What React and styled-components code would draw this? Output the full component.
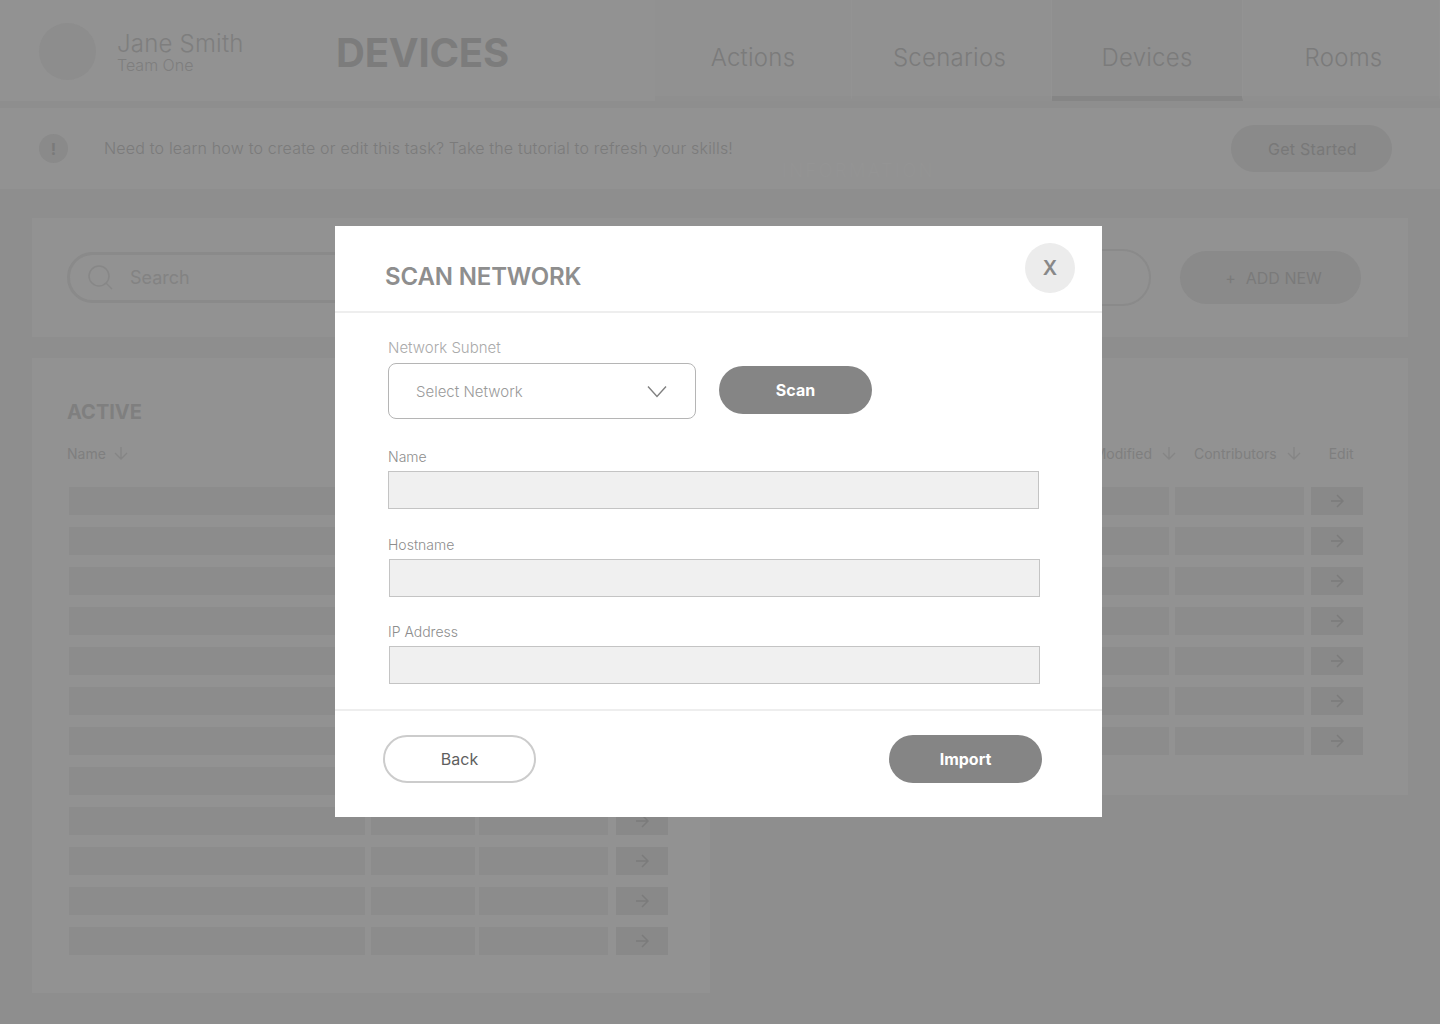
import React from 'react';
import styled, { createGlobalStyle } from 'styled-components';

const GlobalStyle = createGlobalStyle`
  html, body {
    margin: 0;
    padding: 0;
    background: #8e8e8e;
    font-family: Inter, "Liberation Sans", sans-serif;
  }
  * { box-sizing: border-box; }
`;

const Page = styled.div`
  position: relative;
  width: 1440px;
  height: 1024px;
  overflow: hidden;
  background: #8e8e8e;
`;

// header
const Header = styled.header`
  display: flex;
  height: 101px;
  background: #929292;
`;

const Avatar = styled.div`
  width: 57px;
  height: 57px;
  margin: 23px 21px 0 39px;
  border-radius: 50%;
  background: #8d8d8d;
`;

const User = styled.div`
  width: 219px;
  padding-top: 32px;
  color: #7e7e7e;
`;

const UserName = styled.div`
  font-size: 24px;
  font-weight: 300;
  line-height: 24px;
  letter-spacing: 0.2px;
`;

const UserTeam = styled.div`
  font-size: 16px;
  font-weight: 300;
  line-height: 18px;
`;

const PageTitle = styled.h1`
  margin: 29px 0 0;
  font-size: 40px;
  font-weight: 700;
  line-height: 48px;
  letter-spacing: -0.2px;
  color: #7c7c7c;
`;

const Tabs = styled.nav`
  display: flex;
  margin-left: auto;
`;

const Tab = styled.div`
  display: flex;
  justify-content: center;
  width: ${p => p.$w}px;
  padding: 42px ${p => p.$pr || 0}px 0 ${p => p.$pl || 0}px;
  font-size: 24px;
  font-weight: 300;
  line-height: 32px;
  letter-spacing: 0.25px;
  color: #7b7b7b;
  background: ${p => (p.$active ? '#8f8f8f' : '#919191')};
  border-bottom: 5px solid ${p => (p.$active ? '#858585' : '#8f8f8f')};
  border-right: 1px solid #939393;
`;

// info bar
const InfoBar = styled.div`
  position: relative;
  display: flex;
  align-items: center;
  height: 81px;
  margin-top: 7px;
  padding: 0 48px 0 39px;
  background: #929292;
`;

const InfoIcon = styled.div`
  display: flex;
  align-items: center;
  justify-content: center;
  width: 29px;
  height: 29px;
  margin-right: 36px;
  border-radius: 50%;
  background: #8a8a8a;
  font-size: 16px;
  font-weight: 700;
  color: #7a7a7a;
`;

const InfoText = styled.div`
  margin-top: -2px;
  font-size: 16px;
  font-weight: 300;
  letter-spacing: 0.18px;
  color: #7b7b7b;
`;

const GhostLabel = styled.div`
  position: absolute;
  left: 782px;
  top: 52px;
  font-size: 18px;
  font-weight: 300;
  letter-spacing: 2.6px;
  color: #949494;
`;

const PillButton = styled.div`
  display: flex;
  align-items: center;
  justify-content: center;
  width: ${p => p.$w}px;
  height: ${p => p.$h}px;
  border-radius: 30px;
  background: #8a8a8a;
  font-size: 16px;
  color: #787878;
`;

const InfoAction = styled(PillButton)`
  margin-left: auto;
  padding: 1px 0 0 2px;
  letter-spacing: 0.25px;
`;

// page body
const Main = styled.main`
  padding: 29px 32px 0;
`;

const SearchCard = styled.section`
  display: flex;
  align-items: center;
  height: 119px;
  padding: 0 47px 0 35px;
  background: #929292;
`;

const SearchBox = styled.div`
  display: flex;
  align-items: center;
  width: 500px;
  height: 51px;
  padding-left: 18px;
  border: 3px solid #8a8a8a;
  border-radius: 26px;
  font-size: 18px;
  color: #838383;
`;

const SearchLabel = styled.span`
  margin-left: 16px;
`;

const FilterBox = styled.div`
  width: 531px;
  height: 57px;
  margin-left: 53px;
  border: 2px solid #8a8a8a;
  border-radius: 29px;
`;

const AddButton = styled(PillButton)`
  margin-left: 29px;
  padding-left: 6px;
  gap: 10px;
  color: #7a7a7a;
`;

const Columns = styled.div`
  display: flex;
  justify-content: space-between;
  align-items: flex-start;
  margin-top: 21px;
`;

const TableCard = styled.section`
  width: 678px;
  height: ${p => p.$h}px;
  padding: 42px 0 0 35px;
  background: #929292;
`;

const TableTitle = styled.h2`
  margin: 0;
  font-size: 20px;
  font-weight: 700;
  line-height: 24px;
  color: #7f7f7f;
`;

const TableHead = styled.div`
  display: flex;
  align-items: center;
  height: 20px;
  margin-top: 19px;
  font-size: 14px;
  font-weight: 400;
  color: #7f7f7f;
`;

const HeadCell = styled.div`
  display: flex;
  align-items: center;
  flex: none;
  gap: ${p => p.$gap || 8}px;
  margin-left: ${p => p.$ml || 0}px;
`;

const Rows = styled.div`
  display: flex;
  flex-direction: column;
  gap: 12px;
  margin: 24px 0 0 2px;
`;

const Row = styled.div`
  display: flex;
  height: 28px;
`;

const Cell = styled.div`
  width: ${p => p.$w}px;
  margin-left: ${p => p.$ml || 0}px;
  background: #8c8c8c;
`;

const ArrowCell = styled(Cell)`
  display: flex;
  align-items: center;
  justify-content: center;
  background: #898989;
  color: #7b7b7b;
`;

// modal
const Modal = styled.div`
  position: absolute;
  left: 335px;
  top: 226px;
  width: 767px;
  height: 591px;
  background: #fff;
  display: flex;
  flex-direction: column;
`;

const ModalHead = styled.div`
  position: relative;
  height: 87px;
  padding: 37px 0 0 50px;
  border-bottom: 2px solid #eeeeee;
`;

const ModalTitle = styled.h2`
  margin: 0;
  font-size: 24px;
  font-weight: 600;
  line-height: 28px;
  letter-spacing: -0.15px;
  color: #8e8e8e;
`;

const CloseButton = styled.div`
  position: absolute;
  top: 17px;
  right: 27px;
  display: flex;
  align-items: center;
  justify-content: center;
  width: 50px;
  height: 50px;
  border-radius: 50%;
  background: #ececec;
  font-size: 20px;
  font-weight: 600;
  color: #888888;
`;

const ModalBody = styled.div`
  height: 398px;
  padding: 25px 0 0 53px;
  border-bottom: 2px solid #eeeeee;
`;

const SubnetLabel = styled.div`
  font-size: 15px;
  font-weight: 300;
  line-height: 20px;
  color: #aaaaaa;
`;

const SubnetRow = styled.div`
  display: flex;
  align-items: flex-start;
  margin-top: 5px;
`;

const Select = styled.div`
  display: flex;
  align-items: center;
  justify-content: space-between;
  width: 308px;
  height: 56px;
  padding: 0 28px 0 27px;
  border: 1px solid #b5b5b5;
  border-radius: 8px;
  font-size: 15px;
  font-weight: 300;
  color: #9a9a9a;
`;

const SolidButton = styled.div`
  display: flex;
  align-items: center;
  justify-content: center;
  width: 153px;
  height: 48px;
  border-radius: 24px;
  background: #858585;
  font-size: 16px;
  font-weight: 700;
  color: #fff;
`;

const ScanButton = styled(SolidButton)`
  margin: 3px 0 0 23px;
`;

const Field = styled.div`
  margin-top: ${p => p.$mt}px;
  margin-left: ${p => p.$ml || 0}px;
`;

const FieldLabel = styled.div`
  margin-left: ${p => (p.$ml ? -p.$ml : 0)}px;
  font-size: 14px;
  font-weight: 300;
  line-height: 18px;
  color: #8d8d8d;
`;

const FieldInput = styled.div`
  width: 651px;
  height: 38px;
  margin-top: 5px;
  background: #f0f0f0;
  border: 1px solid #c4c4c4;
`;

const ModalFoot = styled.div`
  display: flex;
  justify-content: space-between;
  padding: 24px 60px 0 48px;
`;

const BackButton = styled.div`
  display: flex;
  align-items: center;
  justify-content: center;
  width: 153px;
  height: 48px;
  border: 2px solid #cccccc;
  border-radius: 24px;
  font-size: 16px;
  color: #5f5f5f;
`;

const ArrowRight = () => (
  <svg width="14" height="14" viewBox="0 0 14 14" fill="none" stroke="currentColor" strokeWidth="1.5">
    <path d="M1 7h12M7 1l6 6-6 6" />
  </svg>
);

const ArrowDown = () => (
  <svg width="14" height="14" viewBox="0 0 14 14" fill="none" stroke="#858585" strokeWidth="1.3">
    <path d="M7 1v12M1 7l6 6 6-6" />
  </svg>
);

const SearchIcon = () => (
  <svg width="26" height="26" viewBox="0 0 26 26" fill="none" stroke="#878787" strokeWidth="1.5">
    <circle cx="11" cy="11" r="10" />
    <path d="M18 18l6 6" />
  </svg>
);

const Chevron = () => (
  <svg width="20" height="13" viewBox="0 0 20 13" fill="none" stroke="#808080" strokeWidth="1.4">
    <path d="M1 1.5l9 10 9-10" />
  </svg>
);

function TableRows({ count, widths, margins }) {
  return (
    <Rows>
      {Array.from({ length: count }).map((_, i) => (
        <Row key={i}>
          <Cell $w={widths[0]} />
          <Cell $w={widths[1]} $ml={margins[0]} />
          <Cell $w={widths[2]} $ml={margins[1]} />
          <ArrowCell $w={widths[3]} $ml={margins[2]}>
            <ArrowRight />
          </ArrowCell>
        </Row>
      ))}
    </Rows>
  );
}

export default function App() {
  return (
    <Page>
      <GlobalStyle />
      <Header>
        <Avatar />
        <User>
          <UserName>Jane Smith</UserName>
          <UserTeam>Team One</UserTeam>
        </User>
        <PageTitle>DEVICES</PageTitle>
        <Tabs>
          <Tab $w={197}>Actions</Tab>
          <Tab $w={200} $pr={4}>Scenarios</Tab>
          <Tab $w={191} $active>Devices</Tab>
          <Tab $w={197} $pl={5}>Rooms</Tab>
        </Tabs>
      </Header>

      <InfoBar>
        <InfoIcon>!</InfoIcon>
        <InfoText>Need to learn how to create or edit this task? Take the tutorial to refresh your skills!</InfoText>
        <GhostLabel>INFORMATION</GhostLabel>
        <InfoAction $w={161} $h={47}>Get Started</InfoAction>
      </InfoBar>

      <Main>
        <SearchCard>
          <SearchBox>
            <SearchIcon />
            <SearchLabel>Search</SearchLabel>
          </SearchBox>
          <FilterBox />
          <AddButton $w={181} $h={53}>
            <span>+</span>
            <span>ADD NEW</span>
          </AddButton>
        </SearchCard>

        <Columns>
          <TableCard $h={635}>
            <TableTitle>ACTIVE</TableTitle>
            <TableHead>
              <HeadCell $gap={8}>Name <ArrowDown /></HeadCell>
            </TableHead>
            <TableRows count={12} widths={[296, 104, 129, 52]} margins={[6, 4, 8]} />
          </TableCard>

          <TableCard $h={437}>
            <TableTitle>&nbsp;</TableTitle>
            <TableHead>
              <HeadCell $ml={297} $gap={10}>Last Modified <ArrowDown /></HeadCell>
              <HeadCell $ml={18} $gap={10}>Contributors <ArrowDown /></HeadCell>
              <HeadCell $ml={28}>Edit</HeadCell>
            </TableHead>
            <TableRows count={7} widths={[296, 100, 129, 52]} margins={[6, 6, 7]} />
          </TableCard>
        </Columns>
      </Main>

      <Modal>
        <ModalHead>
          <ModalTitle>SCAN NETWORK</ModalTitle>
          <CloseButton>X</CloseButton>
        </ModalHead>
        <ModalBody>
          <SubnetLabel>Network Subnet</SubnetLabel>
          <SubnetRow>
            <Select>
              <span>Select Network</span>
              <Chevron />
            </Select>
            <ScanButton>Scan</ScanButton>
          </SubnetRow>
          <Field $mt={29}>
            <FieldLabel>Name</FieldLabel>
            <FieldInput />
          </Field>
          <Field $mt={27} $ml={1}>
            <FieldLabel $ml={1}>Hostname</FieldLabel>
            <FieldInput />
          </Field>
          <Field $mt={26} $ml={1}>
            <FieldLabel $ml={1}>IP Address</FieldLabel>
            <FieldInput />
          </Field>
        </ModalBody>
        <ModalFoot>
          <BackButton>Back</BackButton>
          <SolidButton>Import</SolidButton>
        </ModalFoot>
      </Modal>
    </Page>
  );
}
